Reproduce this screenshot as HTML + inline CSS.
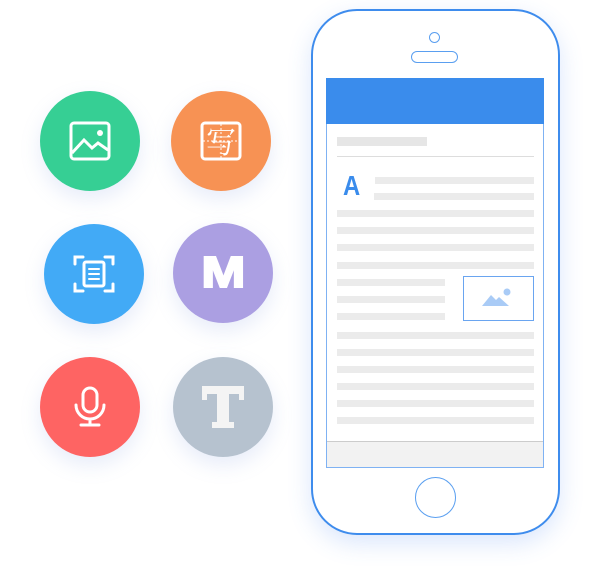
<!DOCTYPE html><html><head><style>
body{margin:0;width:600px;height:580px;background:#fff;position:relative;overflow:hidden;font-family:"Liberation Sans",sans-serif}
.c{position:absolute;width:100px;height:100px;border-radius:50%;box-shadow:0 8px 20px rgba(120,150,220,.18);display:flex;align-items:center;justify-content:center}
.l{position:absolute;height:7px;background:#ebebeb;left:337px;width:197px}
</style></head><body>
<div class="c" style="left:40px;top:91px;background:#36cf94"><svg width="44" height="44" viewBox="0 0 44 44" fill="none" stroke="#fff" stroke-width="3"><rect x="3" y="4" width="38" height="36" rx="3"/><path d="M4 34 L16 21 L24 29 L30 24 L40 31"/><circle cx="32" cy="14" r="3" fill="#fff" stroke="none"/></svg></div>
<div class="c" style="left:171px;top:91px;background:#f79254"><svg width="44" height="44" viewBox="0 0 44 44" fill="none" stroke="#fff" stroke-width="3"><rect x="3" y="4" width="38" height="36" rx="3"/><path d="M4 22H40M22 5V39" stroke-width="1" stroke-dasharray="2 2"/><text x="22" y="34" text-anchor="middle" font-size="30" fill="#fff" stroke="none" font-family="Noto Serif CJK SC,serif">写</text></svg></div>
<div class="c" style="left:44px;top:224px;background:#42aaf6"><svg width="44" height="44" viewBox="0 0 44 44" fill="none" stroke="#fff" stroke-width="3" stroke-linecap="round"><path d="M3 12V5h8M33 5h8v7M41 32v7h-8M11 39H3v-7"/><rect x="12" y="10" width="20" height="24" rx="2"/><path d="M17 17h10M17 22h10M17 27h10" stroke-width="2"/></svg></div>
<div class="c" style="left:173px;top:223px;background:#ab9fe2;color:#fff;font-weight:900;font-size:44px;"><span style="display:inline-block;transform:scaleX(1.2);-webkit-text-stroke:2px #fff">M</span></div>
<div class="c" style="left:40px;top:357px;background:#fe6463"><svg width="44" height="44" viewBox="0 0 44 44" fill="none" stroke="#fff" stroke-width="3" stroke-linecap="round"><rect x="15" y="3" width="14" height="24" rx="7"/><path d="M8 20a14 14 0 0 0 28 0M22 34v6M13 40h18"/></svg></div>
<div class="c" style="left:173px;top:357px;background:#b6c2cf"><svg width="46" height="46" viewBox="0 0 46 46" fill="#f4f4f4"><path d="M2 2H44V16H39V10H29V38H34V44H12V38H17V10H7V16H2Z"/></svg></div>
<div style="position:absolute;left:311px;top:9px;width:245px;height:522px;border:2.5px solid #3e8ced;border-radius:46px;box-shadow:0 8px 24px rgba(70,130,240,.2)"></div>
<div style="position:absolute;left:429px;top:32px;width:9px;height:9px;border:1.5px solid #5a9ff0;border-radius:50%"></div>
<div style="position:absolute;left:411px;top:51px;width:45px;height:10px;border:1.5px solid #5a9ff0;border-radius:6px"></div>
<div style="position:absolute;left:326px;top:78px;width:216px;height:388px;border:1px solid #7fb2f3"></div>
<div style="position:absolute;left:326px;top:78px;width:218px;height:46px;background:#3a8cec"></div>
<div style="position:absolute;left:337px;top:137px;width:90px;height:9px;background:#e6e6e6"></div>
<div style="position:absolute;left:337px;top:156px;width:197px;height:1px;background:#ddd"></div>
<div style="position:absolute;left:343px;top:170px;color:#3a8cec;font-weight:bold;font-size:28px;transform:scaleX(.85);transform-origin:left">A</div>
<div class="l" style="left:375px;width:159px;top:177px"></div>
<div class="l" style="left:374px;width:160px;top:193px"></div>
<div class="l" style="top:210px"></div><div class="l" style="top:227px"></div><div class="l" style="top:244px"></div><div class="l" style="top:262px"></div>
<div class="l" style="top:279px;width:108px"></div><div class="l" style="top:296px;width:108px"></div><div class="l" style="top:313px;width:108px"></div>
<div style="position:absolute;left:463px;top:276px;width:69px;height:43px;border:1.5px solid #6aa5f0"><svg width="69" height="43" viewBox="0 0 69 43"><path d="M18 29L27 18L32 23L35 20L45 29Z" fill="#a9cbf6"/><circle cx="43" cy="15" r="3.5" fill="#a9cbf6"/></svg></div>
<div class="l" style="top:332px"></div><div class="l" style="top:349px"></div><div class="l" style="top:366px"></div><div class="l" style="top:383px"></div><div class="l" style="top:400px"></div><div class="l" style="top:417px"></div>
<div style="position:absolute;left:327px;top:441px;width:216px;height:25px;background:#f2f2f2;border-top:1px solid #ccc"></div>
<div style="position:absolute;left:415px;top:477px;width:39px;height:39px;border:1.5px solid #5a9ff0;border-radius:50%"></div>
</body></html>
